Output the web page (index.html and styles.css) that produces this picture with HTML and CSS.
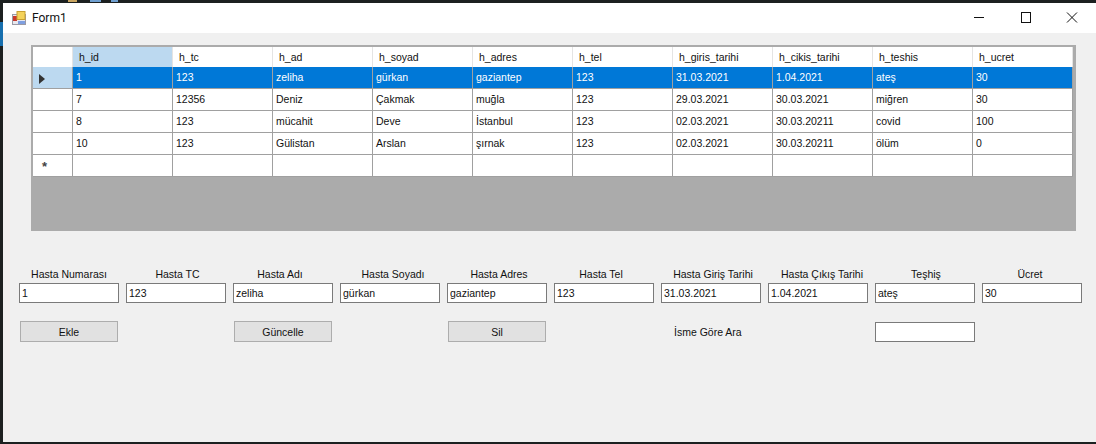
FILE: index.html
```html
<!DOCTYPE html>
<html lang="en">
<head>
  <meta charset="UTF-8" />
  <title>Form1</title>
  <link rel="stylesheet" href="styles.css">
</head>
<body>
  <div class="window">
    <div class="titlebar">
      <svg class="app-icon" width="14" height="14" viewBox="0 0 14 14">
        <rect x="0.5" y="3.5" width="13" height="10" fill="#e8e8ee" stroke="#9a9aa6" />
        <rect x="1" y="5" width="4" height="5" fill="#c8382c" />
        <rect x="5" y="0.5" width="8" height="8" fill="#f4d25a" stroke="#c8a030" />
        <rect x="6" y="10" width="7" height="3" fill="#7f9fe0" />
      </svg>
      <span class="title">Form1</span>
      <div class="win-buttons">
        <svg width="46" height="30" viewBox="0 0 46 30"><path d="M17 14.5h10" stroke="#111" fill="none" /></svg>
        <svg width="46" height="30" viewBox="0 0 46 30"><rect x="18.5" y="9.5" width="9" height="10" stroke="#111" fill="none" /></svg>
        <svg width="46" height="30" viewBox="0 0 46 30"><path d="M18 9.5l10 10M28 9.5l-10 10" stroke="#111" fill="none" /></svg>
      </div>
    </div>

    <div class="content">
      <div class="grid-view">
        <table>
          <thead>
            <tr>
              <th class="row-head"></th>
              <th class="active">h_id</th>
              <th>h_tc</th>
              <th>h_ad</th>
              <th>h_soyad</th>
              <th>h_adres</th>
              <th>h_tel</th>
              <th>h_giris_tarihi</th>
              <th>h_cikis_tarihi</th>
              <th>h_teshis</th>
              <th>h_ucret</th>
            </tr>
          </thead>
          <tbody>
            <tr class="selected">
              <td class="row-head"><span class="arrow"></span></td>
              <td>1</td><td>123</td><td>zeliha</td><td>gürkan</td><td>gaziantep</td><td>123</td><td>31.03.2021</td><td>1.04.2021</td><td>ateş</td><td>30</td>
            </tr>
            <tr>
              <td class="row-head"></td>
              <td>7</td><td>12356</td><td>Deniz</td><td>Çakmak</td><td>muğla</td><td>123</td><td>29.03.2021</td><td>30.03.2021</td><td>miğren</td><td>30</td>
            </tr>
            <tr>
              <td class="row-head"></td>
              <td>8</td><td>123</td><td>mücahit</td><td>Deve</td><td>İstanbul</td><td>123</td><td>02.03.2021</td><td>30.03.20211</td><td>covid</td><td>100</td>
            </tr>
            <tr>
              <td class="row-head"></td>
              <td>10</td><td>123</td><td>Gülistan</td><td>Arslan</td><td>şırnak</td><td>123</td><td>02.03.2021</td><td>30.03.20211</td><td>ölüm</td><td>0</td>
            </tr>
            <tr>
              <td class="row-head"><span class="star">*</span></td>
              <td></td><td></td><td></td><td></td><td></td><td></td><td></td><td></td><td></td><td></td>
            </tr>
          </tbody>
        </table>
      </div>

      <div class="form-row labels">
        <label>Hasta Numarası</label>
        <label>Hasta TC</label>
        <label>Hasta Adı</label>
        <label>Hasta Soyadı</label>
        <label>Hasta Adres</label>
        <label>Hasta Tel</label>
        <label>Hasta Giriş Tarihi</label>
        <label>Hasta Çıkış Tarihi</label>
        <label>Teşhiş</label>
        <label>Ücret</label>
      </div>

      <div class="form-row inputs">
        <input type="text" value="1" />
        <input type="text" value="123" />
        <input type="text" value="zeliha" />
        <input type="text" value="gürkan" />
        <input type="text" value="gaziantep" />
        <input type="text" value="123" />
        <input type="text" value="31.03.2021" />
        <input type="text" value="1.04.2021" />
        <input type="text" value="ateş" />
        <input type="text" value="30" />
      </div>

      <div class="form-row actions">
        <button class="col-1">Ekle</button>
        <button class="col-3">Güncelle</button>
        <button class="col-5">Sil</button>
        <span class="search-label">İsme Göre Ara</span>
        <input class="search-box" type="text" />
      </div>
    </div>
  </div>
</body>
</html>
```

FILE: styles.css
```css
html, body {
  margin: 0;
  height: 100%;
}
body {
  background:
    linear-gradient(#c9a560, #c9a560) 68px 0 / 9px 2px no-repeat,
    linear-gradient(#6f9fd0, #6f9fd0) 90px 0 / 11px 2px no-repeat,
    linear-gradient(#6f9fd0, #6f9fd0) 111px 0 / 7px 2px no-repeat,
    linear-gradient(#176fae, #176fae) 0 22px / 3px 24px no-repeat,
    #1c2020;
  padding: 3px 0 2px 3px;
  box-sizing: border-box;
  font-family: "Liberation Sans", Arial, sans-serif;
  font-size: 10.5px;
  color: #111;
  overflow: hidden;
}
.window {
  height: 100%;
  display: flex;
  flex-direction: column;
  background: #f0f0f0;
}
.titlebar {
  height: 30px;
  flex: none;
  display: flex;
  align-items: center;
  background: #fff;
  padding-left: 9px;
}
.app-icon {
  margin-right: 6px;
}
.title {
  font-family: Roboto, "Liberation Sans", sans-serif;
  font-size: 12px;
}
.win-buttons {
  margin-left: auto;
  margin-right: 1px;
  display: flex;
}
.win-buttons svg {
  display: block;
}
.content {
  flex: 1;
  padding-top: 12px;
}

/* data grid */
.grid-view {
  margin-left: 28px;
  width: 1040px;
  height: 184px;
  padding: 2px 3px 0 2px;
  background: #ababab;
}
table {
  border-collapse: separate;
  border-spacing: 0;
  table-layout: fixed;
  width: 1040px;
}
th, td {
  width: 100px;
  box-sizing: border-box;
  padding: 0 0 0 3px;
  text-align: left;
  font-weight: normal;
  background: #fff;
  overflow: hidden;
  white-space: nowrap;
}
th {
  height: 20px;
  padding-left: 6px;
  border-right: 1px solid #e4e4e4;
}
td {
  height: 22px;
  padding-bottom: 2px;
  border-right: 1px solid #a0a0a0;
  border-bottom: 1px solid #a0a0a0;
}
th.row-head, td.row-head {
  width: 40px;
  padding: 0 0 0 6px;
}
th.active {
  background: #bcd9f0;
}
.selected td {
  background: #0078d7;
  color: #fff;
}
.selected td.row-head {
  background: #bcd9f0;
}
.arrow {
  display: inline-block;
  border-left: 6px solid #333;
  border-top: 5px solid transparent;
  border-bottom: 5px solid transparent;
  vertical-align: middle;
}
.star {
  margin-left: 3px;
  font-size: 13px;
  font-weight: bold;
  color: #444;
  vertical-align: -4px;
}

/* fields below the grid */
.form-row {
  display: grid;
  grid-template-columns: repeat(10, 100px);
  column-gap: 7px;
  margin-left: 16px;
}
.labels {
  margin-top: 36px;
  height: 14px;
  line-height: 14px;
  text-align: center;
  margin-bottom: 2px;
}
/* the designer left these labels a bit off centre */
.labels label:nth-child(2) { padding-left: 3px; }
.labels label:nth-child(3) { padding-right: 6px; }
.labels label:nth-child(4) { padding-left: 6px; }
.labels label:nth-child(5) { padding-left: 4px; }
.labels label:nth-child(6) { padding-right: 6px; }
.labels label:nth-child(7) { padding-left: 4px; }
.labels label:nth-child(8) { padding-left: 8px; }
.labels label:nth-child(9) { padding-left: 2px; }
.labels label:nth-child(10) { padding-right: 4px; }
input {
  height: 20px;
  width: 100%;
  box-sizing: border-box;
  margin: 0;
  padding: 0 2px;
  border: 1px solid #7a7a7a;
  border-radius: 0;
  background: #fff;
  font: inherit;
  color: #111;
}
.actions {
  margin-top: 18px;
  height: 22px;
  align-items: start;
}
button {
  width: 98px;
  height: 21px;
  margin-left: 1px;
  padding: 0;
  background: #e1e1e1;
  border: 1px solid #adadad;
  font: inherit;
  color: #111;
}
.col-1 { grid-column: 1; }
.col-3 { grid-column: 3; }
.col-5 { grid-column: 5; }
.search-label {
  grid-column: 7 / span 2;
  align-self: center;
  padding-left: 13px;
}
.search-box {
  grid-column: 9;
  margin-top: 1px;
}
```
